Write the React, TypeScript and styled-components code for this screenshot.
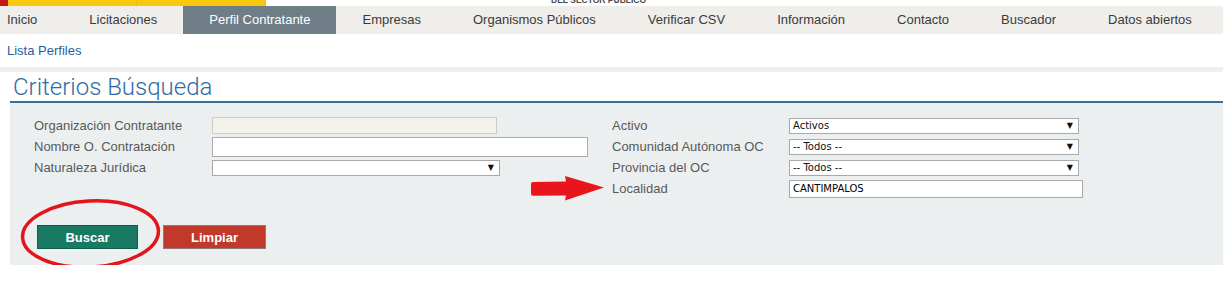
import styled, { createGlobalStyle } from "styled-components";

const GlobalStyle = createGlobalStyle`
  html, body {
    margin: 0;
    padding: 0;
    background: #fff;
  }
  body {
    font-family: "Liberation Sans", Arial, sans-serif;
    font-size: 13px;
    color: #333;
  }
`;

const Page = styled.div`
  width: 1223px;
  overflow: hidden;
`;

const TopStrip = styled.div`
  display: flex;
  height: 6px;
  overflow: hidden;
`;

const FlagRed = styled.div`
  width: 8px;
  background: #c8161d;
`;

const FlagYellow = styled.div`
  width: 128px;
  background: #f9c80d;
  border-right: 1px solid #f2bf08;
`;

const SectorText = styled.span`
  margin-left: 285px;
  margin-top: -5px;
  font-size: 8.5px;
  line-height: 10px;
  font-weight: bold;
  color: #4a4a4a;
  white-space: nowrap;
`;

const Nav = styled.nav`
  display: flex;
  height: 28px;
  background: #efeeea;
`;

const NavItem = styled.div<{ $active?: boolean; $first?: boolean }>`
  display: flex;
  align-items: center;
  padding: 0 26px 2px;
  padding-left: ${({ $first }) => ($first ? "7px" : "26px")};
  background: ${({ $active }) => ($active ? "#6f7e86" : "transparent")};
  color: ${({ $active }) => ($active ? "#fff" : "#3a3a3a")};
  white-space: nowrap;
`;

const SubBar = styled.div`
  display: flex;
  align-items: center;
  height: 33px;
  padding-left: 7px;
`;

const SubLink = styled.a`
  color: #1f5f9e;
  text-decoration: none;
`;

const Band = styled.div`
  height: 5px;
  background: #edf0ef;
`;

const Section = styled.section`
  margin-left: 10px;
`;

const Heading = styled.h2`
  margin: 0;
  padding: 1px 0 0 3px;
  height: 28px;
  font-family: Roboto, "Liberation Sans", sans-serif;
  font-weight: 300;
  font-size: 24px;
  line-height: 28px;
  color: #2e6ca8;
  border-bottom: 2px solid #3b6f9c;
`;

const Panel = styled.div`
  background: #eceff0;
  padding: 12px 0 16px 24px;
`;

const FormGrid = styled.div`
  display: grid;
  grid-template-columns: 178px 400px 177px 320px;
  grid-auto-rows: 21px;
  align-items: center;
`;

const Label = styled.span`
  color: #595959;
  white-space: nowrap;
`;

const TextInput = styled.input<{ $width: number; $height: number }>`
  box-sizing: border-box;
  width: ${({ $width }) => $width}px;
  height: ${({ $height }) => $height}px;
  margin: 0;
  padding: 0 3px;
  border: 1px solid #a9a9a9;
  background: #fff;
  font-family: "DejaVu Sans", Verdana, sans-serif;
  font-size: 10px;
  color: #000;
  outline: none;

  &:disabled {
    background: #f4f3eb;
    border-color: #cdcdc8;
  }
`;

const SelectBox = styled.div<{ $width: number }>`
  box-sizing: border-box;
  display: flex;
  align-items: center;
  justify-content: space-between;
  width: ${({ $width }) => $width}px;
  height: 16px;
  padding: 0 5px 0 3px;
  border: 1px solid #a9a9a9;
  background: #fff;
  font-family: "DejaVu Sans", Verdana, sans-serif;
  font-size: 10px;
  color: #111;
`;

const SelectArrow = styled.span`
  font-size: 8px;
  line-height: 8px;
  color: #111;
`;

const ArrowCell = styled.div`
  justify-self: end;
  margin-right: 8px;
  height: 25px;
  display: flex;
  align-items: center;
`;

const ButtonRow = styled.div`
  position: relative;
  display: flex;
  gap: 25px;
  margin: 26px 0 0 3px;
`;

const Button = styled.button<{ $variant: "search" | "clear" }>`
  box-sizing: border-box;
  height: 24px;
  width: ${({ $variant }) => ($variant === "search" ? "101px" : "103px")};
  margin: 0;
  padding: 0;
  border: 1px solid ${({ $variant }) => ($variant === "search" ? "#0f5e4a" : "#8c7b78")};
  background: ${({ $variant }) => ($variant === "search" ? "#187a62" : "#c0392b")};
  color: #fff;
  font-family: "Liberation Sans", Arial, sans-serif;
  font-size: 13px;
  font-weight: bold;
  cursor: pointer;
`;

const Ring = styled.svg`
  position: absolute;
  left: -17px;
  top: -27px;
  pointer-events: none;
`;

const navItems = [
  "Inicio",
  "Licitaciones",
  "Perfil Contratante",
  "Empresas",
  "Organismos Públicos",
  "Verificar CSV",
  "Información",
  "Contacto",
  "Buscador",
  "Datos abiertos",
];

function Select({ value, width }: { value: string; width: number }) {
  return (
    <SelectBox $width={width}>
      <span>{value}</span>
      <SelectArrow>▼</SelectArrow>
    </SelectBox>
  );
}

export default function App() {
  return (
    <Page>
      <GlobalStyle />
      <TopStrip>
        <FlagRed />
        <FlagYellow />
        <FlagYellow />
        <SectorText>DEL SECTOR PUBLICO</SectorText>
      </TopStrip>
      <Nav>
        {navItems.map((item, i) => (
          <NavItem key={item} $first={i === 0} $active={item === "Perfil Contratante"}>
            {item}
          </NavItem>
        ))}
      </Nav>
      <SubBar>
        <SubLink href="#">Lista Perfiles</SubLink>
      </SubBar>
      <Band />
      <Section>
        <Heading>Criterios Búsqueda</Heading>
        <Panel>
          <FormGrid>
            <Label>Organización Contratante</Label>
            <TextInput $width={285} $height={17} disabled />
            <Label>Activo</Label>
            <Select value="Activos" width={290} />

            <Label>Nombre O. Contratación</Label>
            <TextInput $width={376} $height={20} />
            <Label>Comunidad Autónoma OC</Label>
            <Select value="-- Todos --" width={290} />

            <Label>Naturaleza Jurídica</Label>
            <Select value="" width={288} />
            <Label>Provincia del OC</Label>
            <Select value="-- Todos --" width={290} />

            <span />
            <ArrowCell>
              <svg width="74" height="25" viewBox="0 0 74 25">
                <path
                  d="M3 6 L36 5.5 L35 0 L74 11.5 L35 24.5 L36 19.5 L3 19.8 Q1 19.8 1 17.5 L1 8 Q1 6 3 6 Z"
                  fill="#e8151c"
                />
              </svg>
            </ArrowCell>
            <Label>Localidad</Label>
            <TextInput $width={294} $height={18} defaultValue="CANTIMPALOS" />
          </FormGrid>
          <ButtonRow>
            <Button $variant="search">Buscar</Button>
            <Button $variant="clear">Limpiar</Button>
            <Ring width="144" height="74" viewBox="0 0 144 74">
              <ellipse
                cx="70.5"
                cy="36"
                rx="68"
                ry="33"
                transform="rotate(-3 70.5 36)"
                fill="none"
                stroke="#e3141c"
                strokeWidth="3.5"
              />
            </Ring>
          </ButtonRow>
        </Panel>
      </Section>
    </Page>
  );
}
